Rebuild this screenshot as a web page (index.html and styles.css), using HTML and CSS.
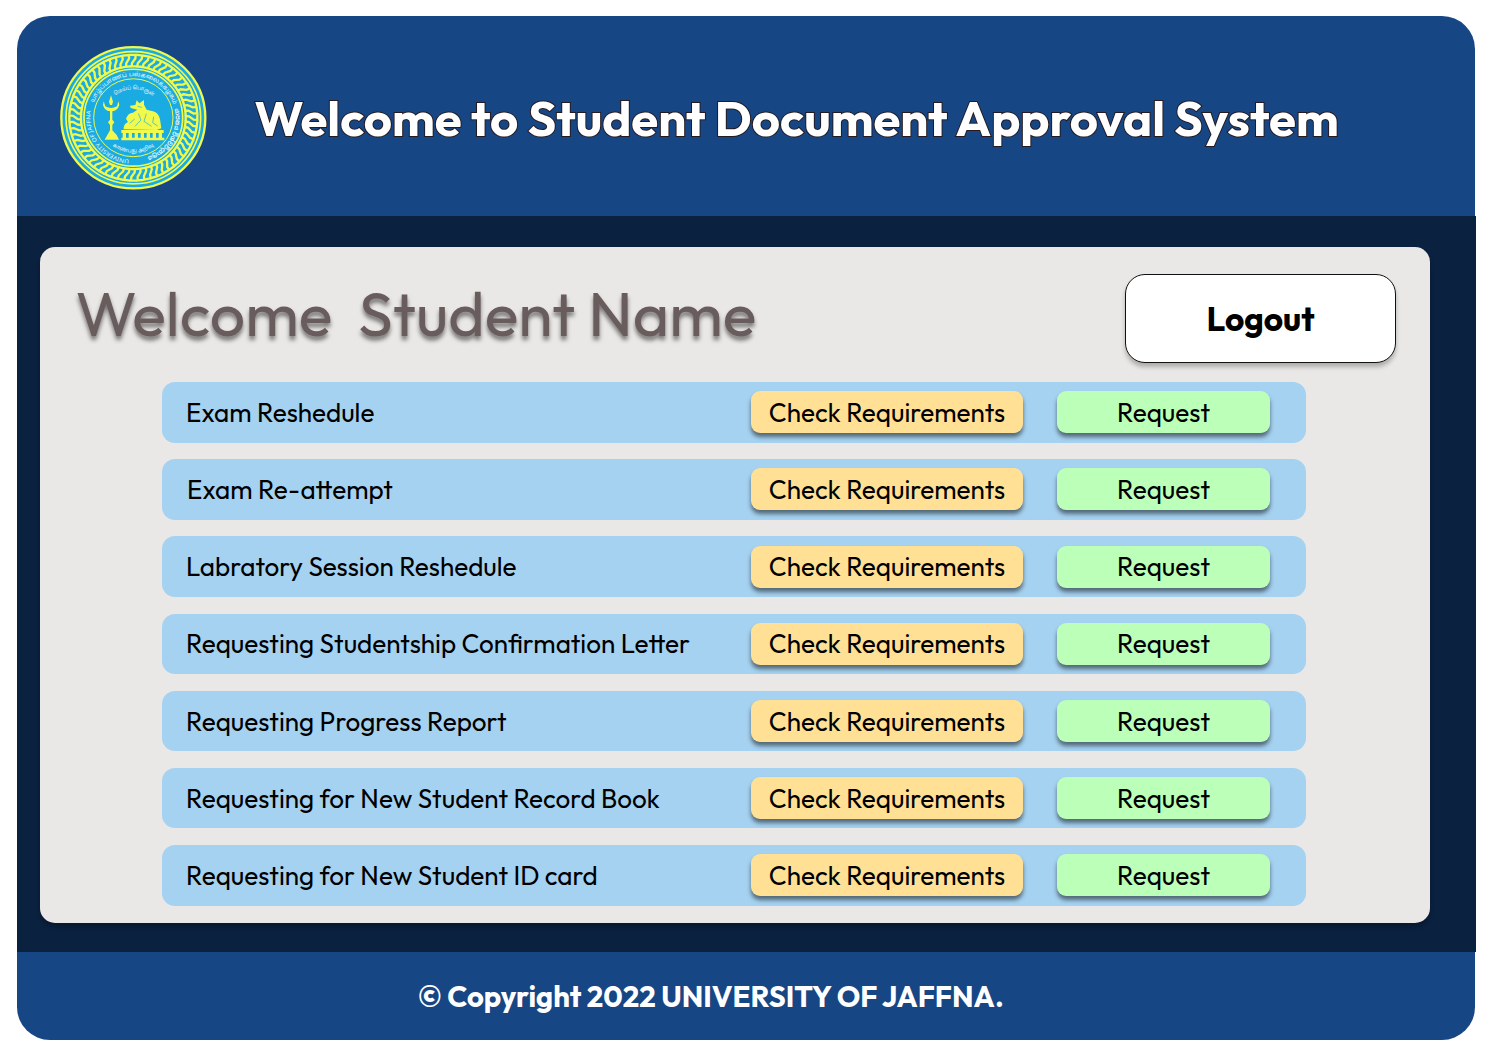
FILE: index.html
```html
<!DOCTYPE html>
<html lang="en">
<head>
<meta charset="utf-8">
<title>Student Document Approval System</title>
<link rel="stylesheet" href="styles.css">
</head>
<body>
<div class="app">
  <header class="header">
    <svg class="seal" viewBox="0 0 498 492" role="img" aria-label="University of Jaffna">
      <defs>
        <path id="knot" d="M239 53 H257 L256 64 L246 78 L245 88 H261" fill="none" stroke="#f1fa4b" stroke-width="7"/>
        <g id="knots5">
          <use href="#knot"/>
          <use href="#knot" transform="rotate(6 250 245)"/>
          <use href="#knot" transform="rotate(12 250 245)"/>
          <use href="#knot" transform="rotate(18 250 245)"/>
          <use href="#knot" transform="rotate(24 250 245)"/>
        </g>
        <path id="arcTop" d="M123 245 A127 127 0 0 1 377 245"/>
        <path id="arcRight" d="M250 118 A127 127 0 0 1 250 372"/>
        <path id="arcLeft" d="M250 374 A129 129 0 0 1 250 116"/>
        <path id="arcInner" d="M163 245 A87 87 0 0 1 337 245"/>
        <path id="arcLow" d="M144 245 A106 106 0 0 0 356 245"/>
      </defs>
      <g transform="translate(0 4.6) scale(1 .982)">
        <circle cx="250" cy="245" r="216" fill="#1aabe2" stroke="#f1fa4b" stroke-width="7"/>
        <circle cx="250" cy="245" r="202" fill="none" stroke="#f1fa4b" stroke-width="5"/>
        <use href="#knots5"/>
        <use href="#knots5" transform="rotate(30 250 245)"/>
        <use href="#knots5" transform="rotate(60 250 245)"/>
        <use href="#knots5" transform="rotate(90 250 245)"/>
        <use href="#knots5" transform="rotate(120 250 245)"/>
        <use href="#knots5" transform="rotate(150 250 245)"/>
        <use href="#knots5" transform="rotate(180 250 245)"/>
        <use href="#knots5" transform="rotate(210 250 245)"/>
        <use href="#knots5" transform="rotate(240 250 245)"/>
        <use href="#knots5" transform="rotate(270 250 245)"/>
        <use href="#knots5" transform="rotate(300 250 245)"/>
        <use href="#knots5" transform="rotate(330 250 245)"/>
        <circle cx="250" cy="245" r="148" fill="none" stroke="#f1fa4b" stroke-width="5"/>
        <circle cx="250" cy="245" r="119" fill="none" stroke="#f1fa4b" stroke-width="3"/>
        <g class="seal-text">
          <text font-size="18"><textPath href="#arcTop" startOffset="46" textLength="312" lengthAdjust="spacingAndGlyphs">யாழ்ப்பாணப் பல்கலைக்கழகம்</textPath></text>
          <text font-size="19" font-weight="700"><textPath href="#arcRight" startOffset="172" textLength="184" lengthAdjust="spacingAndGlyphs">යාපනය විශ්වවිද්‍යාලය</textPath></text>
          <text font-size="17"><textPath href="#arcLeft" startOffset="12" textLength="212" lengthAdjust="spacingAndGlyphs">UNIVERSITY OF JAFFNA</textPath></text>
          <text font-size="16"><textPath href="#arcInner" startOffset="78" textLength="122" lengthAdjust="spacingAndGlyphs">மெய்ப் பொருள்</textPath></text>
          <text font-size="16"><textPath href="#arcLow" startOffset="100" textLength="132" lengthAdjust="spacingAndGlyphs">காண்பது அறிவு</textPath></text>
        </g>
      </g>
      <g fill="#f1fa4b">
        <path d="M183 178 L189 197 L186 207 H180 L177 197Z M161 196 L166 211 Q183 221 201 211 L205 196 L208 207 Q202 225 187 226 V251 L193 259 L187 267 V283 L200 297 L207 311 H164 L172 297 L180 283 V267 L174 259 L180 251 V226 Q164 225 159 207Z"/>
        <path d="M214 282 H341 V291 H214Z M214 305 H343 V313 H214Z M218 291h10v14h-10z M236 291h10v14h-10z M254 291h10v14h-10z M272 291h10v14h-10z M290 291h10v14h-10z M308 291h10v14h-10z M326 291h10v14h-10z"/>
        <path d="M221 280 Q220 264 234 258 L228 248 Q234 230 249 230 L262 221 L242 216 L240 209 L256 207 L260 193 L268 202 L282 192 L282 206 L290 221 L309 226 Q326 230 330 250 L334 277 L320 282 Z"/>
      </g>
      <path d="M239 262 L254 249 M265 232 L273 252 L255 271 M289 233 L282 256 L305 271 M311 242 L308 260 L323 270 M263 211 L275 214" fill="none" stroke="#1aabe2" stroke-width="2"/>
    </svg>
    <h1 class="title">Welcome to Student Document Approval System</h1>
  </header>
  <main class="main">
    <section class="panel">
      <div class="panel-head">
        <h2 class="greeting">Welcome  Student Name</h2>
        <button class="logout">Logout</button>
      </div>
      <ul class="list">
        <li class="row"><span class="label">Exam Reshedule</span><button class="btn check">Check Requirements</button><button class="btn request">Request</button></li>
        <li class="row"><span class="label label-inset">Exam Re-attempt</span><button class="btn check">Check Requirements</button><button class="btn request">Request</button></li>
        <li class="row"><span class="label">Labratory Session Reshedule</span><button class="btn check">Check Requirements</button><button class="btn request">Request</button></li>
        <li class="row"><span class="label">Requesting Studentship Confirmation Letter</span><button class="btn check">Check Requirements</button><button class="btn request">Request</button></li>
        <li class="row"><span class="label">Requesting Progress Report</span><button class="btn check">Check Requirements</button><button class="btn request">Request</button></li>
        <li class="row"><span class="label">Requesting for New Student Record Book</span><button class="btn check">Check Requirements</button><button class="btn request">Request</button></li>
        <li class="row"><span class="label">Requesting for New Student ID card</span><button class="btn check">Check Requirements</button><button class="btn request">Request</button></li>
      </ul>
    </section>
  </main>
  <footer class="footer">© Copyright 2022 UNIVERSITY OF JAFFNA.</footer>
</div>
</body>
</html>
```
FILE: styles.css
```css
* { box-sizing: border-box; }
body {
  margin: 0;
  padding: 16px 0 14px 17px;
  background: #fff;
  font-family: Outfit, Lato, sans-serif;
  color: #000;
}
h1, h2, ul { margin: 0; padding: 0; font-weight: 400; }
button { font-family: inherit; padding: 0; border: 0; color: #000; white-space: nowrap; }

.app { width: 1459px; height: 1024px; display: flex; flex-direction: column; }

.header {
  width: 1458px;
  height: 200px;
  padding: 20px 0 0 33px;
  display: flex;
  gap: 38.5px;
  background: #174684;
  border-radius: 33px 33px 0 0;
}
.seal { width: 166px; height: 164px; flex: none; }
.seal-text { fill: #e8fbff; font-family: "Noto Sans Tamil", "Noto Sans Sinhala", "Liberation Sans", sans-serif; }
.title {
  padding-top: 51px;
  font-size: 49px;
  line-height: 62px;
  font-weight: 700;
  color: #fff;
  white-space: nowrap;
  -webkit-text-stroke: 2px #241a20;
  paint-order: stroke fill;
}

.main { height: 736px; padding: 31px 0 0 23px; background: #0b2140; }
.panel {
  width: 1390px;
  height: 676px;
  padding: 27px 34px 0 35.5px;
  background: #e9e8e6;
  border-radius: 15px;
  box-shadow: 0 4px 4px rgba(0, 0, 0, .25);
}
.panel-head { display: flex; justify-content: space-between; height: 108px; }
.greeting {
  font-size: 62.6px;
  line-height: 78px;
  color: #695c5c;
  white-space: pre;
  text-shadow: 0 4px 4px rgba(0, 0, 0, .5);
}
.logout {
  width: 271px;
  height: 89px;
  background: #fff;
  border: 1px solid #111;
  border-radius: 20px;
  box-shadow: 0 4px 4px rgba(0, 0, 0, .25);
  font-size: 33.5px;
  font-weight: 700;
}

.list { width: 1144px; margin-left: 86.5px; list-style: none; display: flex; flex-direction: column; gap: 16.7px; }
.row {
  height: 60.5px;
  padding: 0 36px 0 24px;
  display: flex;
  align-items: center;
  background: #a5d2f1;
  border-radius: 13px;
}
.label { flex: 1; font-size: 26.07px; white-space: nowrap; }
.label-inset { padding-left: 1px; }
.btn { height: 42px; border-radius: 9px; font-size: 26.07px; box-shadow: 0 4px 4px rgba(0, 0, 0, .5); }
.check { width: 272px; margin-right: 34px; background: #ffe095; }
.request { width: 213px; background: #bbffb9; }

.footer {
  width: 1458px;
  height: 88px;
  padding-left: 401px;
  background: #174684;
  border-radius: 0 0 33px 33px;
  color: #fff;
  font-size: 29.2px;
  font-weight: 700;
  line-height: 90px;
}
```
